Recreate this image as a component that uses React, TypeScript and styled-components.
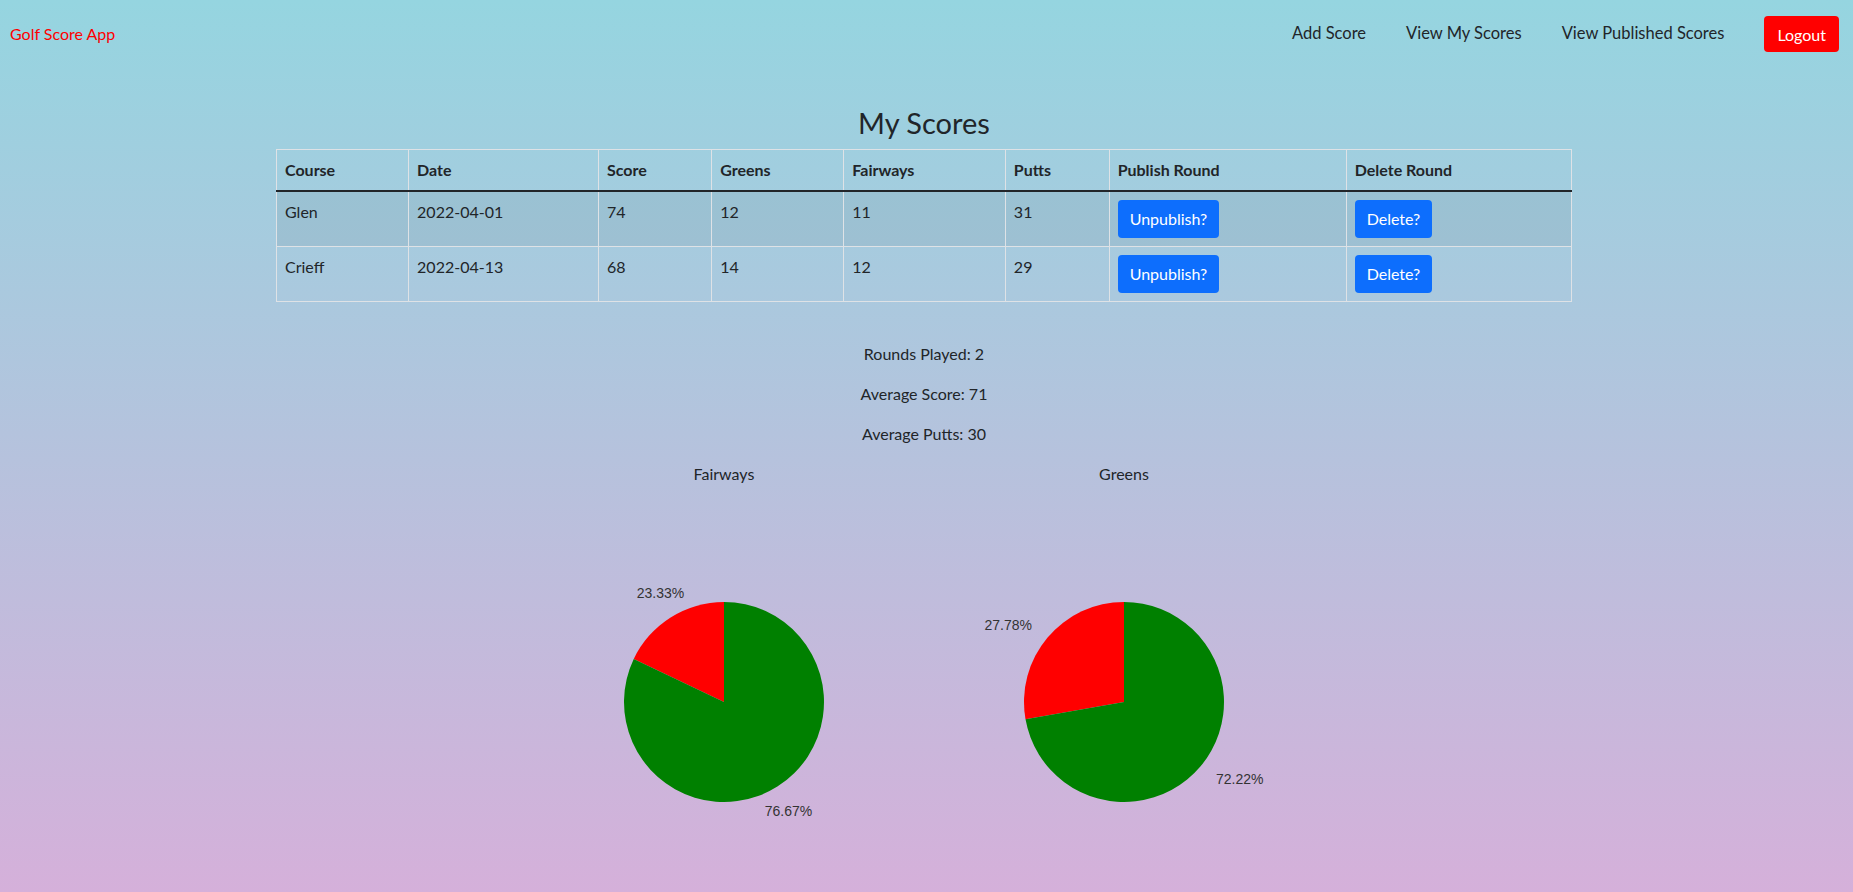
import React from "react";
import styled, { createGlobalStyle } from "styled-components";

const GlobalStyle = createGlobalStyle`
  html, body {
    margin: 0;
    padding: 0;
    height: 100%;
    overflow: hidden;
  }
  body {
    font-family: Lato, "Noto Sans", sans-serif;
    color: #212529;
    line-height: 1.5;
    background: linear-gradient(180deg, #95d5e0 0%, #d5b0da 100%);
    min-height: 892px;
  }
  * { box-sizing: border-box; }
`;

const Page = styled.div`
  min-height: 892px;
  display: flex;
  flex-direction: column;
  padding-right: 5px;
`;

const NavBar = styled.nav`
  display: flex;
  justify-content: space-between;
  align-items: flex-start;
  padding: 16px 9px 0 10px;
  height: 70px;
`;

const Brand = styled.a`
  color: #ff0000;
  font-size: 16px;
  text-decoration: none;
  margin-top: 6px;
`;

const NavLinks = styled.div`
  display: flex;
  align-items: center;
`;

const NavLink = styled.a`
  color: #212529;
  font-size: 16.5px;
  text-decoration: none;
  padding: 0 20px;
  margin-top: -1px;
`;

const LogoutButton = styled.button`
  background: #ff0000;
  color: #fff;
  border: none;
  border-radius: 4px;
  font-family: inherit;
  font-size: 16px;
  height: 36px;
  padding: 0 13px;
  margin-left: 20px;
`;

const Container = styled.main`
  width: 1296px;
  margin: 0 auto;
  display: flex;
  flex-direction: column;
  align-items: center;
`;

const Title = styled.h2`
  font-weight: 400;
  font-size: 29px;
  margin: 0 0 8px;
  line-height: 1.2;
  padding-top: 36px;
`;

const Table = styled.table`
  width: 100%;
  border-collapse: collapse;
  font-size: 16px;
`;

const Th = styled.th<{ $w: string }>`
  text-align: left;
  font-weight: 700;
  padding: 8px;
  width: ${(p) => p.$w};
  border: 1px solid #dee2e6;
  border-bottom: 2px solid #212529;
  vertical-align: bottom;
`;

const Tr = styled.tr<{ $striped?: boolean }>`
  background: ${(p) => (p.$striped ? "rgba(0,0,0,0.05)" : "transparent")};
`;

const Td = styled.td`
  padding: 8px;
  border: 1px solid #dee2e6;
  vertical-align: top;
`;

const BlueButton = styled.button`
  background: #0d6efd;
  color: #fff;
  border: none;
  border-radius: 4px;
  font-family: inherit;
  font-size: 16px;
  height: 38px;
  padding: 0 12px;
`;

const Stats = styled.div`
  margin-top: 40px;
  display: flex;
  flex-direction: column;
  align-items: center;
`;

const StatLine = styled.p`
  margin: 0 0 16px;
  line-height: 24px;
  font-size: 16px;
`;

const Charts = styled.div`
  display: flex;
  justify-content: center;
`;

const ChartBox = styled.div`
  width: 400px;
  display: flex;
  flex-direction: column;
  align-items: center;
`;

const ChartTitle = styled.p`
  margin: 0;
  line-height: 24px;
  font-size: 16px;
  height: 40px;
`;

const PieSvg = styled.svg`
  display: block;
`;

const LabelText = styled.text`
  font-family: "Liberation Sans", Arial, sans-serif;
  font-size: 14px;
  fill: #333;
`;

type Slice = { from: number; to: number; color: string };
type Label = { x: number; y: number; anchor: "start" | "middle" | "end"; text: string };

const pt = (a: number, r: number) => {
  const rad = (a * Math.PI) / 180;
  return [200 + r * Math.cos(rad), 200 - r * Math.sin(rad)];
};

const slicePath = (s: Slice, r = 100) => {
  const [x1, y1] = pt(s.from, r);
  const [x2, y2] = pt(s.to, r);
  const large = s.to - s.from > 180 ? 1 : 0;
  return `M200,200 L${x1},${y1} A${r},${r} 0 ${large} 0 ${x2},${y2} Z`;
};

const Pie: React.FC<{ slices: Slice[]; labels: Label[] }> = ({ slices, labels }) => (
  <PieSvg width={400} height={400} viewBox="0 0 400 400">
    {slices.map((s, i) => (
      <path key={i} d={slicePath(s)} fill={s.color} />
    ))}
    {labels.map((l, i) => (
      <LabelText key={i} x={l.x} y={l.y} textAnchor={l.anchor} dominantBaseline="central">
        {l.text}
      </LabelText>
    ))}
  </PieSvg>
);

const rows = [
  { course: "Glen", date: "2022-04-01", score: 74, greens: 12, fairways: 11, putts: 31 },
  { course: "Crieff", date: "2022-04-13", score: 68, greens: 14, fairways: 12, putts: 29 },
];

const headers: [string, string][] = [
  ["Course", "112px"],
  ["Date", "161px"],
  ["Score", "96px"],
  ["Greens", "112px"],
  ["Fairways", "137px"],
  ["Putts", "88px"],
  ["Publish Round", "201px"],
  ["Delete Round", "191px"],
];

export default function App() {
  return (
    <Page>
      <GlobalStyle />
      <NavBar>
        <Brand href="#">Golf Score App</Brand>
        <NavLinks>
          <NavLink href="#">Add Score</NavLink>
          <NavLink href="#">View My Scores</NavLink>
          <NavLink href="#">View Published Scores</NavLink>
          <LogoutButton>Logout</LogoutButton>
        </NavLinks>
      </NavBar>
      <Container>
        <Title>My Scores</Title>
        <Table>
          <thead>
            <tr>
              {headers.map(([h, w]) => (
                <Th key={h} $w={w}>
                  {h}
                </Th>
              ))}
            </tr>
          </thead>
          <tbody>
            {rows.map((r, i) => (
              <Tr key={r.course} $striped={i === 0}>
                <Td>{r.course}</Td>
                <Td>{r.date}</Td>
                <Td>{r.score}</Td>
                <Td>{r.greens}</Td>
                <Td>{r.fairways}</Td>
                <Td>{r.putts}</Td>
                <Td>
                  <BlueButton>Unpublish?</BlueButton>
                </Td>
                <Td>
                  <BlueButton>Delete?</BlueButton>
                </Td>
              </Tr>
            ))}
          </tbody>
        </Table>
        <Stats>
          <StatLine>Rounds Played: 2</StatLine>
          <StatLine>Average Score: 71</StatLine>
          <StatLine>Average Putts: 30</StatLine>
        </Stats>
        <Charts>
          <ChartBox>
            <ChartTitle>Fairways</ChartTitle>
            <Pie
              slices={[
                { from: 90, to: 154.5, color: "#ff0000" },
                { from: 154.5, to: 450, color: "#008000" },
              ]}
              labels={[
                { x: 136.5, y: 91, anchor: "middle", text: "23.33%" },
                { x: 264.5, y: 309, anchor: "middle", text: "76.67%" },
              ]}
            />
          </ChartBox>
          <ChartBox>
            <ChartTitle>Greens</ChartTitle>
            <Pie
              slices={[
                { from: 90, to: 190, color: "#ff0000" },
                { from: 190, to: 450, color: "#008000" },
              ]}
              labels={[
                { x: 108, y: 123, anchor: "end", text: "27.78%" },
                { x: 292, y: 277, anchor: "start", text: "72.22%" },
              ]}
            />
          </ChartBox>
        </Charts>
      </Container>
    </Page>
  );
}
